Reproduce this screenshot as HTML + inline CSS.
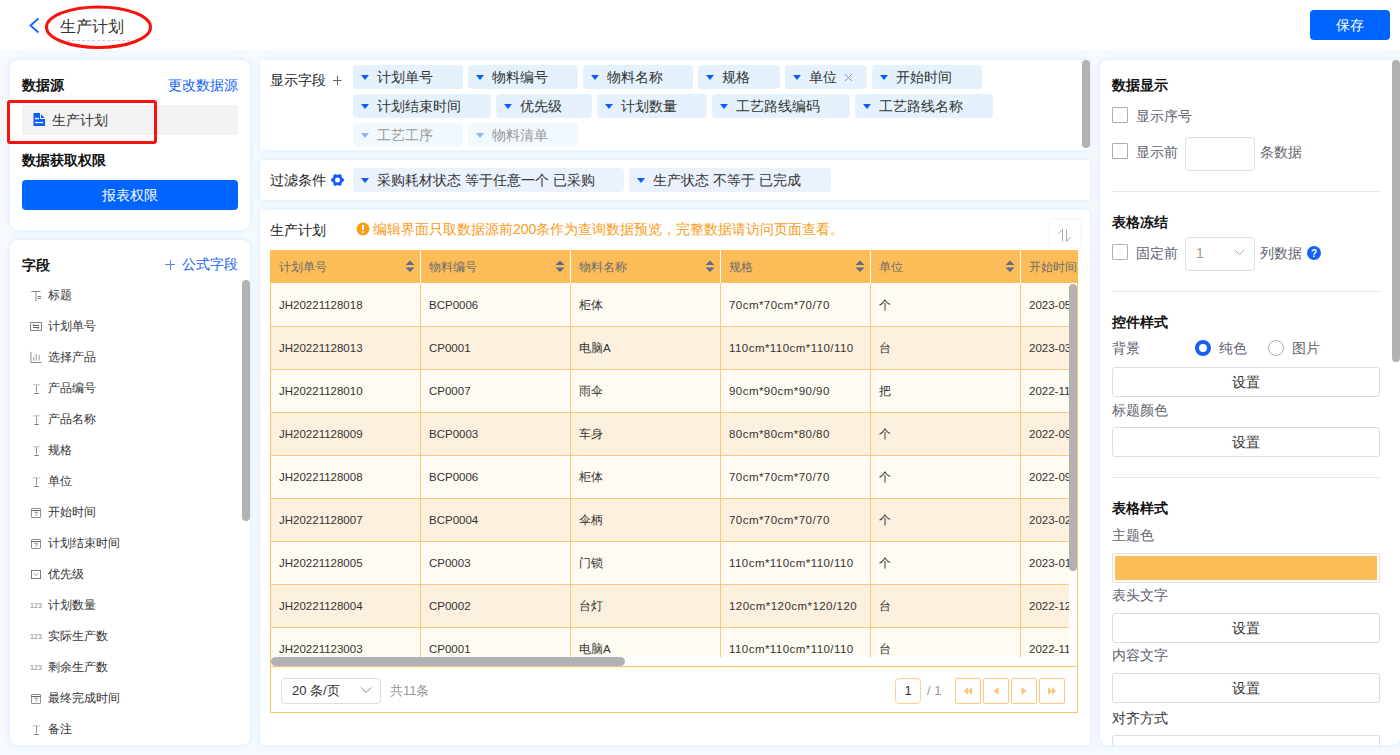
<!DOCTYPE html><html><head><meta charset="utf-8"><style>
*{box-sizing:border-box;margin:0;padding:0}
html,body{width:1400px;height:755px;overflow:hidden}
body{font-family:"Liberation Sans",sans-serif;background:#f5faff;position:relative;color:#333}
.abs{position:absolute;white-space:nowrap}
.card{position:absolute;background:#fff;box-shadow:0 0 6px rgba(60,140,240,0.15)}
.btn{position:absolute;background:#0064ff;color:#fff;border-radius:4px;text-align:center;font-size:14px}
.bold{font-weight:bold;font-size:14px;color:#111}
.blue{color:#1463fa}
.fi{position:absolute;left:0;width:250px;height:20px}
.fi svg{position:absolute;left:30px;top:4px}
.fi span{position:absolute;left:48px;top:0;font-size:12px;line-height:20px;color:#333}
.tag{position:absolute;height:24px;background:#e5f2fe;border-radius:4px;font-size:14px;color:#333;line-height:24px;white-space:nowrap}
.tag i{position:absolute;left:8px;top:10px;width:0;height:0;border-left:4px solid transparent;border-right:4px solid transparent;border-top:5px solid #0a5cff}
.tag b{position:absolute;left:24px;top:0;font-weight:normal}
.tag.dis{background:#f1f8fe;color:#999}
.tag.dis i{border-top-color:#8db5fb}
.tag.f{background:#ebf1fd}
.th{position:absolute;top:250px;height:33px;background:#fcbd59;font-size:12px;color:#666;line-height:33px}
.td{position:absolute;font-size:11.5px;color:#333;line-height:43px;overflow:hidden}
.lbl{position:absolute;font-size:14px;color:#5f6470;line-height:20px;white-space:nowrap}
.cb{position:absolute;left:1112px;width:16px;height:16px;border:1px solid #a9acbb;border-radius:1px;background:#fff}
.sbtn{position:absolute;left:1112px;width:268px;height:30px;border:1px solid #dcdcdc;border-radius:3px;text-align:center;line-height:28px;font-size:14px;color:#333;background:#fff}
.hr{position:absolute;left:1112px;width:268px;height:1px;background:#e6e6e6}
.pbtn{position:absolute;top:678px;width:26px;height:26px;border:1px solid #fbca80;border-radius:2px;background:#fff}
</style></head><body>
<div class="abs" style="left:0;top:0;width:1400px;height:50px;background:#fff"></div>
<svg class="abs" style="left:0;top:0" width="160" height="50">
<polyline points="38.5,18.5 30.5,25.5 38.5,32.5" fill="none" stroke="#1d6cf5" stroke-width="2"/>
<line x1="67" y1="40.5" x2="130" y2="40.5" stroke="#d0d0d0" stroke-dasharray="3,2" stroke-width="1"/>
<ellipse cx="98.5" cy="27.2" rx="52" ry="20.2" fill="none" stroke="#f8120e" stroke-width="3"/>
</svg>
<div class="abs" style="left:60px;top:16px;line-height:22px;font-size:16px;color:#333">生产计划</div>
<div class="btn" style="left:1310px;top:10px;width:80px;height:30px;line-height:30px">保存</div>
<div class="card" style="left:10px;top:60px;width:240px;height:170px;border-radius:8px"></div>
<div class="abs bold" style="left:22px;top:75px;line-height:20px">数据源</div>
<div class="abs blue" style="left:168px;top:75px;line-height:20px;font-size:14px">更改数据源</div>
<div class="abs" style="left:22px;top:105px;width:216px;height:30px;background:#f3f3f4;border-radius:2px"></div>
<svg class="abs" style="left:33px;top:112px" width="13" height="15" viewBox="0 0 13 15">
<path d="M0.5 1H7V7H12V14H0.5Z" fill="#0d5cff"/><path d="M8 2V6H11.5Z" fill="#0d5cff"/>
<rect x="2" y="5.9" width="4" height="1.3" fill="#fff"/><rect x="2" y="9.9" width="8" height="1.3" fill="#fff"/>
</svg>
<div class="abs" style="left:52px;top:110px;line-height:20px;font-size:14px;color:#333">生产计划</div>
<div class="abs" style="left:7px;top:100px;width:150px;height:44px;border:3px solid #f8120e;border-radius:3px"></div>
<div class="abs bold" style="left:22px;top:150px;line-height:20px">数据获取权限</div>
<div class="btn" style="left:22px;top:180px;width:216px;height:30px;line-height:30px">报表权限</div>
<div class="card" style="left:10px;top:240px;width:240px;height:505px;border-radius:8px"></div>
<div class="abs bold" style="left:22px;top:255px;line-height:20px">字段</div>
<div class="abs blue" style="left:182px;top:254px;line-height:20px;font-size:14px">公式字段</div>
<svg class="abs" style="left:165px;top:260px" width="10" height="10"><path d="M0 4.5H10M5.5 0V10" stroke="#5a86f8" stroke-width="1"/></svg>
<div class="abs" style="left:242px;top:280px;width:8px;height:241px;background:#b2b2b2;border-radius:4px"></div>
<div class="fi" style="top:285px"><svg width="14" height="14"><path d="M1.3 2.5H10.6M5.9 2.5V12" stroke="#8a8a8a" fill="none"/><path d="M7.5 7.5H11M7.5 9.5H11" stroke="#777"/></svg><span>标题</span></div>
<div class="fi" style="top:316px"><svg width="14" height="14"><rect x="0.5" y="2.5" width="11" height="8" stroke="#8a8a8a" fill="none"/><path d="M2.8 5.5H9.2M2.8 5.5L4.4 4.1M2.8 7.5H9.2L7.4 8.9" stroke="#666" fill="none"/></svg><span>计划单号</span></div>
<div class="fi" style="top:347px"><svg width="14" height="14"><path d="M0.9 0.8V11.5H11.6" stroke="#8a8a8a" fill="none"/><path d="M3.8 6V9.7M6.2 3V9.7M9.2 4V9.7" stroke="#999" fill="none"/></svg><span>选择产品</span></div>
<div class="fi" style="top:378px"><svg width="14" height="14"><path d="M3 2.8H10.4" stroke="#c4c4c4" fill="none"/><path d="M6.5 2.8V10.4" stroke="#aa8f8f" fill="none"/><path d="M4.4 11.5H8.7" stroke="#777" fill="none"/></svg><span>产品编号</span></div>
<div class="fi" style="top:409px"><svg width="14" height="14"><path d="M3 2.8H10.4" stroke="#c4c4c4" fill="none"/><path d="M6.5 2.8V10.4" stroke="#aa8f8f" fill="none"/><path d="M4.4 11.5H8.7" stroke="#777" fill="none"/></svg><span>产品名称</span></div>
<div class="fi" style="top:440px"><svg width="14" height="14"><path d="M3 2.8H10.4" stroke="#c4c4c4" fill="none"/><path d="M6.5 2.8V10.4" stroke="#aa8f8f" fill="none"/><path d="M4.4 11.5H8.7" stroke="#777" fill="none"/></svg><span>规格</span></div>
<div class="fi" style="top:471px"><svg width="14" height="14"><path d="M3 2.8H10.4" stroke="#c4c4c4" fill="none"/><path d="M6.5 2.8V10.4" stroke="#aa8f8f" fill="none"/><path d="M4.4 11.5H8.7" stroke="#777" fill="none"/></svg><span>单位</span></div>
<div class="fi" style="top:502px"><svg width="14" height="14"><rect x="1.5" y="2.5" width="9" height="9" stroke="#8f8f9a" fill="none" rx="0.5"/><path d="M1.5 4.5H10.5" stroke="#666"/><path d="M4 6.3H7.6L5.6 9.9" stroke="#999" fill="none"/></svg><span>开始时间</span></div>
<div class="fi" style="top:533px"><svg width="14" height="14"><rect x="1.5" y="2.5" width="9" height="9" stroke="#8f8f9a" fill="none" rx="0.5"/><path d="M1.5 4.5H10.5" stroke="#666"/><path d="M4 6.3H7.6L5.6 9.9" stroke="#999" fill="none"/></svg><span>计划结束时间</span></div>
<div class="fi" style="top:564px"><svg width="14" height="14"><rect x="1.5" y="2.5" width="9" height="8" stroke="#7a7a7a" fill="none"/><path d="M3.5 5.2L5.75 7.5L8 5.2" stroke="#999" fill="none"/></svg><span>优先级</span></div>
<div class="fi" style="top:595px"><svg width="16" height="12"><text x="0" y="9" font-size="8" fill="#888" font-family="Liberation Sans" textLength="12" lengthAdjust="spacingAndGlyphs">123</text></svg><span>计划数量</span></div>
<div class="fi" style="top:626px"><svg width="16" height="12"><text x="0" y="9" font-size="8" fill="#888" font-family="Liberation Sans" textLength="12" lengthAdjust="spacingAndGlyphs">123</text></svg><span>实际生产数</span></div>
<div class="fi" style="top:657px"><svg width="16" height="12"><text x="0" y="9" font-size="8" fill="#888" font-family="Liberation Sans" textLength="12" lengthAdjust="spacingAndGlyphs">123</text></svg><span>剩余生产数</span></div>
<div class="fi" style="top:688px"><svg width="14" height="14"><rect x="1.5" y="2.5" width="9" height="9" stroke="#8f8f9a" fill="none" rx="0.5"/><path d="M1.5 4.5H10.5" stroke="#666"/><path d="M4 6.3H7.6L5.6 9.9" stroke="#999" fill="none"/></svg><span>最终完成时间</span></div>
<div class="fi" style="top:719px"><svg width="14" height="14"><path d="M3 2.8H10.4" stroke="#c4c4c4" fill="none"/><path d="M6.5 2.8V10.4" stroke="#aa8f8f" fill="none"/><path d="M4.4 11.5H8.7" stroke="#777" fill="none"/></svg><span>备注</span></div>
<div class="card" style="left:260px;top:60px;width:830px;height:90px;border-radius:4px"></div>
<div class="abs" style="left:270px;top:70px;line-height:20px;font-size:14px;color:#222">显示字段</div>
<svg class="abs" style="left:332px;top:76px" width="10" height="10"><path d="M1 4.5H9.5M5.5 0V9" stroke="#666" stroke-width="1"/></svg>
<div class="abs" style="left:1082px;top:60px;width:8px;height:88px;background:#b2b2b2;border-radius:4px"></div>
<div class="tag " style="left:353px;top:65px;width:110px"><i></i><b>计划单号</b></div>
<div class="tag " style="left:468px;top:65px;width:110px"><i></i><b>物料编号</b></div>
<div class="tag " style="left:583px;top:65px;width:110px"><i></i><b>物料名称</b></div>
<div class="tag " style="left:698px;top:65px;width:82px"><i></i><b>规格</b></div>
<div class="tag " style="left:785px;top:65px;width:82px"><i></i><b>单位</b><svg class="abs" style="left:59px;top:8px" width="9" height="9"><path d="M1 1L8 8M8 1L1 8" stroke="#7f8ae0" stroke-width="1"/></svg></div>
<div class="tag " style="left:872px;top:65px;width:110px"><i></i><b>开始时间</b></div>
<div class="tag " style="left:353px;top:94px;width:138px"><i></i><b>计划结束时间</b></div>
<div class="tag " style="left:496px;top:94px;width:96px"><i></i><b>优先级</b></div>
<div class="tag " style="left:597px;top:94px;width:110px"><i></i><b>计划数量</b></div>
<div class="tag " style="left:712px;top:94px;width:138px"><i></i><b>工艺路线编码</b></div>
<div class="tag " style="left:855px;top:94px;width:138px"><i></i><b>工艺路线名称</b></div>
<div class="tag dis" style="left:353px;top:123px;width:110px"><i></i><b>工艺工序</b></div>
<div class="tag dis" style="left:468px;top:123px;width:110px"><i></i><b>物料清单</b></div>
<div class="card" style="left:260px;top:160px;width:830px;height:40px;border-radius:4px"></div>
<div class="abs" style="left:270px;top:170px;line-height:20px;font-size:14px;color:#222">过滤条件</div>
<svg class="abs" style="left:330px;top:173px" width="15" height="15"><path d="M12.5 7L10 2.67H5L2.5 7L5 11.33H10Z" fill="#0d5cff" stroke="#0d5cff" stroke-width="3" stroke-linejoin="round"/><circle cx="13.04" cy="10.20" r="1.4" fill="#fff"/><circle cx="7.50" cy="13.40" r="1.4" fill="#fff"/><circle cx="1.96" cy="10.20" r="1.4" fill="#fff"/><circle cx="1.96" cy="3.80" r="1.4" fill="#fff"/><circle cx="7.50" cy="0.60" r="1.4" fill="#fff"/><circle cx="13.04" cy="3.80" r="1.4" fill="#fff"/><circle cx="7.5" cy="7" r="2.5" fill="#fff"/></svg>
<div class="tag f" style="left:353px;top:168px;width:271px"><i></i><b>采购耗材状态 等于任意一个 已采购</b></div>
<div class="tag f" style="left:629px;top:168px;width:202px"><i></i><b>生产状态 不等于 已完成</b></div>
<div class="card" style="left:260px;top:210px;width:830px;height:535px;border-radius:4px"></div>
<div class="abs" style="left:270px;top:220px;line-height:20px;font-size:14px;color:#222">生产计划</div>
<svg class="abs" style="left:356px;top:222px" width="14" height="14"><circle cx="7" cy="7" r="6.4" fill="#fa9c10"/><rect x="6" y="3" width="2" height="5.2" rx="0.8" fill="#fff"/><rect x="6" y="9.2" width="2" height="2" rx="1" fill="#fff"/></svg>
<div class="abs" style="left:373px;top:219px;line-height:20px;font-size:14px;color:#f99c18">编辑界面只取数据源前200条作为查询数据预览，完整数据请访问页面查看。</div>
<div class="abs" style="left:1050px;top:220px;width:30px;height:30px;background:#fff;box-shadow:0 0 4px rgba(80,80,160,0.10)"></div>
<svg class="abs" style="left:1050px;top:220px" width="30" height="30"><path d="M8.5 13.5L12.5 9.5V21.5M16.5 9.5V21.5L20.5 17" stroke="#a8a8b8" fill="none" stroke-width="1"/></svg>
<div class="abs" style="left:270px;top:250px;width:808px;height:463px;border:1px solid #fbc46c;border-top:none;background:#fff"></div>
<div class="abs" style="left:270px;top:250px;width:808px;height:33px;background:#fcbd59;border-radius:0 3px 0 0"></div>
<div class="abs" style="left:279px;top:251px;line-height:33px;font-size:12px;color:#6b6b6b">计划单号</div>
<div class="abs" style="left:420px;top:250px;width:1px;height:33px;background:#fff"></div>
<svg class="abs" style="left:405px;top:260px" width="10" height="13"><path d="M5 0.5L9.5 5H0.5Z M0.5 7.5H9.5L5 12Z" fill="#5d6b86"/></svg>
<div class="abs" style="left:429px;top:251px;line-height:33px;font-size:12px;color:#6b6b6b">物料编号</div>
<div class="abs" style="left:570px;top:250px;width:1px;height:33px;background:#fff"></div>
<svg class="abs" style="left:555px;top:260px" width="10" height="13"><path d="M5 0.5L9.5 5H0.5Z M0.5 7.5H9.5L5 12Z" fill="#5d6b86"/></svg>
<div class="abs" style="left:579px;top:251px;line-height:33px;font-size:12px;color:#6b6b6b">物料名称</div>
<div class="abs" style="left:720px;top:250px;width:1px;height:33px;background:#fff"></div>
<svg class="abs" style="left:705px;top:260px" width="10" height="13"><path d="M5 0.5L9.5 5H0.5Z M0.5 7.5H9.5L5 12Z" fill="#5d6b86"/></svg>
<div class="abs" style="left:729px;top:251px;line-height:33px;font-size:12px;color:#6b6b6b">规格</div>
<div class="abs" style="left:870px;top:250px;width:1px;height:33px;background:#fff"></div>
<svg class="abs" style="left:855px;top:260px" width="10" height="13"><path d="M5 0.5L9.5 5H0.5Z M0.5 7.5H9.5L5 12Z" fill="#5d6b86"/></svg>
<div class="abs" style="left:879px;top:251px;line-height:33px;font-size:12px;color:#6b6b6b">单位</div>
<div class="abs" style="left:1020px;top:250px;width:1px;height:33px;background:#fff"></div>
<svg class="abs" style="left:1005px;top:260px" width="10" height="13"><path d="M5 0.5L9.5 5H0.5Z M0.5 7.5H9.5L5 12Z" fill="#5d6b86"/></svg>
<div class="abs" style="left:1029px;top:251px;line-height:33px;font-size:12px;color:#6b6b6b">开始时间</div>
<div class="abs" style="left:271px;top:283px;width:798px;height:374px;overflow:hidden">
<div class="abs" style="left:0;top:0px;width:798px;height:44px;background:#fffaf2;border-bottom:1px solid #fcc97c"></div>
<div class="abs" style="left:0;top:0px;width:798px;height:1px;background:#fff"></div>
<div class="abs" style="left:0;top:42px;width:798px;height:1px;background:#fff"></div>
<div class="td" style="left:8px;top:1px;width:141px">JH20221128018</div>
<div class="td" style="left:158px;top:1px;width:141px">BCP0006</div>
<div class="td" style="left:308px;top:1px;width:141px">柜体</div>
<div class="td" style="left:458px;top:1px;width:141px;letter-spacing:0.45px">70cm*70cm*70/70</div>
<div class="td" style="left:608px;top:1px;width:141px">个</div>
<div class="td" style="left:758px;top:1px;width:141px">2023-05-01</div>
<div class="abs" style="left:0;top:44px;width:798px;height:43px;background:#fdf0de;border-bottom:1px solid #fcc97c"></div>
<div class="td" style="left:8px;top:44px;width:141px">JH20221128013</div>
<div class="td" style="left:158px;top:44px;width:141px">CP0001</div>
<div class="td" style="left:308px;top:44px;width:141px">电脑A</div>
<div class="td" style="left:458px;top:44px;width:141px;letter-spacing:0.45px">110cm*110cm*110/110</div>
<div class="td" style="left:608px;top:44px;width:141px">台</div>
<div class="td" style="left:758px;top:44px;width:141px">2023-03-01</div>
<div class="abs" style="left:0;top:87px;width:798px;height:43px;background:#fffaf2;border-bottom:1px solid #fcc97c"></div>
<div class="abs" style="left:0;top:87px;width:798px;height:1px;background:#fff"></div>
<div class="abs" style="left:0;top:128px;width:798px;height:1px;background:#fff"></div>
<div class="td" style="left:8px;top:87px;width:141px">JH20221128010</div>
<div class="td" style="left:158px;top:87px;width:141px">CP0007</div>
<div class="td" style="left:308px;top:87px;width:141px">雨伞</div>
<div class="td" style="left:458px;top:87px;width:141px;letter-spacing:0.45px">90cm*90cm*90/90</div>
<div class="td" style="left:608px;top:87px;width:141px">把</div>
<div class="td" style="left:758px;top:87px;width:141px">2022-11-01</div>
<div class="abs" style="left:0;top:130px;width:798px;height:43px;background:#fdf0de;border-bottom:1px solid #fcc97c"></div>
<div class="td" style="left:8px;top:130px;width:141px">JH20221128009</div>
<div class="td" style="left:158px;top:130px;width:141px">BCP0003</div>
<div class="td" style="left:308px;top:130px;width:141px">车身</div>
<div class="td" style="left:458px;top:130px;width:141px;letter-spacing:0.45px">80cm*80cm*80/80</div>
<div class="td" style="left:608px;top:130px;width:141px">个</div>
<div class="td" style="left:758px;top:130px;width:141px">2022-09-01</div>
<div class="abs" style="left:0;top:173px;width:798px;height:43px;background:#fffaf2;border-bottom:1px solid #fcc97c"></div>
<div class="abs" style="left:0;top:173px;width:798px;height:1px;background:#fff"></div>
<div class="abs" style="left:0;top:214px;width:798px;height:1px;background:#fff"></div>
<div class="td" style="left:8px;top:173px;width:141px">JH20221128008</div>
<div class="td" style="left:158px;top:173px;width:141px">BCP0006</div>
<div class="td" style="left:308px;top:173px;width:141px">柜体</div>
<div class="td" style="left:458px;top:173px;width:141px;letter-spacing:0.45px">70cm*70cm*70/70</div>
<div class="td" style="left:608px;top:173px;width:141px">个</div>
<div class="td" style="left:758px;top:173px;width:141px">2022-09-01</div>
<div class="abs" style="left:0;top:216px;width:798px;height:43px;background:#fdf0de;border-bottom:1px solid #fcc97c"></div>
<div class="td" style="left:8px;top:216px;width:141px">JH20221128007</div>
<div class="td" style="left:158px;top:216px;width:141px">BCP0004</div>
<div class="td" style="left:308px;top:216px;width:141px">伞柄</div>
<div class="td" style="left:458px;top:216px;width:141px;letter-spacing:0.45px">70cm*70cm*70/70</div>
<div class="td" style="left:608px;top:216px;width:141px">个</div>
<div class="td" style="left:758px;top:216px;width:141px">2023-02-01</div>
<div class="abs" style="left:0;top:259px;width:798px;height:43px;background:#fffaf2;border-bottom:1px solid #fcc97c"></div>
<div class="abs" style="left:0;top:259px;width:798px;height:1px;background:#fff"></div>
<div class="abs" style="left:0;top:300px;width:798px;height:1px;background:#fff"></div>
<div class="td" style="left:8px;top:259px;width:141px">JH20221128005</div>
<div class="td" style="left:158px;top:259px;width:141px">CP0003</div>
<div class="td" style="left:308px;top:259px;width:141px">门锁</div>
<div class="td" style="left:458px;top:259px;width:141px;letter-spacing:0.45px">110cm*110cm*110/110</div>
<div class="td" style="left:608px;top:259px;width:141px">个</div>
<div class="td" style="left:758px;top:259px;width:141px">2023-01-01</div>
<div class="abs" style="left:0;top:302px;width:798px;height:43px;background:#fdf0de;border-bottom:1px solid #fcc97c"></div>
<div class="td" style="left:8px;top:302px;width:141px">JH20221128004</div>
<div class="td" style="left:158px;top:302px;width:141px">CP0002</div>
<div class="td" style="left:308px;top:302px;width:141px">台灯</div>
<div class="td" style="left:458px;top:302px;width:141px;letter-spacing:0.45px">120cm*120cm*120/120</div>
<div class="td" style="left:608px;top:302px;width:141px">台</div>
<div class="td" style="left:758px;top:302px;width:141px">2022-12-01</div>
<div class="abs" style="left:0;top:345px;width:798px;height:43px;background:#fffaf2;border-bottom:1px solid #fcc97c"></div>
<div class="abs" style="left:0;top:345px;width:798px;height:1px;background:#fff"></div>
<div class="abs" style="left:0;top:386px;width:798px;height:1px;background:#fff"></div>
<div class="td" style="left:8px;top:345px;width:141px">JH20221123003</div>
<div class="td" style="left:158px;top:345px;width:141px">CP0001</div>
<div class="td" style="left:308px;top:345px;width:141px">电脑A</div>
<div class="td" style="left:458px;top:345px;width:141px;letter-spacing:0.45px">110cm*110cm*110/110</div>
<div class="td" style="left:608px;top:345px;width:141px">台</div>
<div class="td" style="left:758px;top:345px;width:141px">2022-11-01</div>
<div class="abs" style="left:149px;top:0;width:1px;height:374px;background:#fcc97c"></div>
<div class="abs" style="left:299px;top:0;width:1px;height:374px;background:#fcc97c"></div>
<div class="abs" style="left:449px;top:0;width:1px;height:374px;background:#fcc97c"></div>
<div class="abs" style="left:599px;top:0;width:1px;height:374px;background:#fcc97c"></div>
<div class="abs" style="left:749px;top:0;width:1px;height:374px;background:#fcc97c"></div>
</div>
<div class="abs" style="left:1069px;top:284px;width:8px;height:373px;background:#fff"></div>
<div class="abs" style="left:1069px;top:284px;width:8px;height:287px;background:#b2b2b2;border-radius:4px"></div>
<div class="abs" style="left:271px;top:657px;width:354px;height:9px;background:#b2b2b2;border-radius:4.5px"></div>
<div class="abs" style="left:270px;top:666px;width:808px;height:1px;background:#fbc46c"></div>
<div class="abs" style="left:281px;top:678px;width:100px;height:26px;border:1px solid #dcdcdc;border-radius:4px;background:#fff"></div>
<div class="abs" style="left:292px;top:681px;line-height:20px;font-size:13px;color:#333">20 条/页</div>
<svg class="abs" style="left:360px;top:686px" width="12" height="8"><path d="M1 1.5L6 6.5L11 1.5" stroke="#888" fill="none"/></svg>
<div class="abs" style="left:390px;top:681px;line-height:20px;font-size:13px;color:#999">共11条</div>
<div class="abs" style="left:895px;top:678px;width:26px;height:26px;border:1px solid #fcd18c;border-radius:4px;background:#fff;text-align:center;line-height:24px;font-size:13px;color:#333">1</div>
<div class="abs" style="left:927px;top:681px;line-height:20px;font-size:13px;color:#999">/ 1</div>
<div class="pbtn" style="left:955px"><svg class="abs" style="left:5px;top:5px" width="14" height="14"><path d="M7 3L3 7L7 11Z M11 3L7 7L11 11Z" fill="#fbc47a"/></svg></div>
<div class="pbtn" style="left:983px"><svg class="abs" style="left:5px;top:5px" width="14" height="14"><path d="M9.5 3L4.5 7L9.5 11Z" fill="#fbc47a"/></svg></div>
<div class="pbtn" style="left:1011px"><svg class="abs" style="left:5px;top:5px" width="14" height="14"><path d="M4.5 3L9.5 7L4.5 11Z" fill="#fbc47a"/></svg></div>
<div class="pbtn" style="left:1039px"><svg class="abs" style="left:5px;top:5px" width="14" height="14"><path d="M3 3L7 7L3 11Z M7 3L11 7L7 11Z" fill="#fbc47a"/></svg></div>
<div class="card" style="left:1100px;top:60px;width:300px;height:685px;border-radius:8px;overflow:hidden">
</div>
<div class="abs" style="left:1392px;top:60px;width:8px;height:302px;background:#b2b2b2;border-radius:4px"></div>
<div class="abs bold" style="left:1112px;top:75px;line-height:20px">数据显示</div>
<div class="cb" style="top:107px"></div><div class="lbl" style="left:1136px;top:106px">显示序号</div>
<div class="cb" style="top:143px"></div><div class="lbl" style="left:1136px;top:142px">显示前</div>
<div class="abs" style="left:1185px;top:137px;width:70px;height:34px;border:1px solid #dedede;border-radius:4px"></div>
<div class="lbl" style="left:1260px;top:142px">条数据</div>
<div class="hr" style="top:191px"></div>
<div class="abs bold" style="left:1112px;top:212px;line-height:20px">表格冻结</div>
<div class="cb" style="top:244px"></div><div class="lbl" style="left:1136px;top:243px">固定前</div>
<div class="abs" style="left:1185px;top:237px;width:70px;height:34px;border:1px solid #dedede;border-radius:4px"></div>
<div class="lbl" style="left:1196px;top:243px;color:#999">1</div>
<svg class="abs" style="left:1234px;top:249px" width="11" height="7"><path d="M1 1L5.5 5.5L10 1" stroke="#aaa" fill="none"/></svg>
<div class="lbl" style="left:1260px;top:243px">列数据</div>
<svg class="abs" style="left:1307px;top:246px" width="14" height="14"><circle cx="7" cy="7" r="7" fill="#1463f5"/><text x="7" y="11" text-anchor="middle" font-size="10" font-weight="bold" fill="#fff" font-family="Liberation Sans">?</text></svg>
<div class="hr" style="top:291px"></div>
<div class="abs bold" style="left:1112px;top:312px;line-height:20px">控件样式</div>
<div class="lbl" style="left:1112px;top:338px">背景</div>
<svg class="abs" style="left:1194px;top:339px" width="18" height="18"><circle cx="9" cy="9" r="6" fill="#fff" stroke="#1a5ff5" stroke-width="4"/></svg>
<div class="lbl" style="left:1219px;top:338px">纯色</div>
<svg class="abs" style="left:1267px;top:339px" width="18" height="18"><circle cx="9" cy="9" r="7.5" fill="#fff" stroke="#a9acbb" stroke-width="1"/></svg>
<div class="lbl" style="left:1292px;top:338px">图片</div>
<div class="sbtn" style="top:367px">设置</div>
<div class="lbl" style="left:1112px;top:400px">标题颜色</div>
<div class="sbtn" style="top:427px">设置</div>
<div class="hr" style="top:477px"></div>
<div class="abs bold" style="left:1112px;top:498px;line-height:20px">表格样式</div>
<div class="lbl" style="left:1112px;top:525px">主题色</div>
<div class="abs" style="left:1112px;top:553px;width:268px;height:30px;border:1px solid #e3e3e3;border-radius:2px;padding:2px"><div style="width:100%;height:100%;background:#fcbd59"></div></div>
<div class="lbl" style="left:1112px;top:585px">表头文字</div>
<div class="sbtn" style="top:613px">设置</div>
<div class="lbl" style="left:1112px;top:645px">内容文字</div>
<div class="sbtn" style="top:673px">设置</div>
<div class="lbl" style="left:1112px;top:708px;color:#333">对齐方式</div>
<div class="abs" style="left:1112px;top:735px;width:268px;height:10px;border:1px solid #dcdcdc;border-bottom:none;border-radius:3px 3px 0 0"></div>
</body></html>
